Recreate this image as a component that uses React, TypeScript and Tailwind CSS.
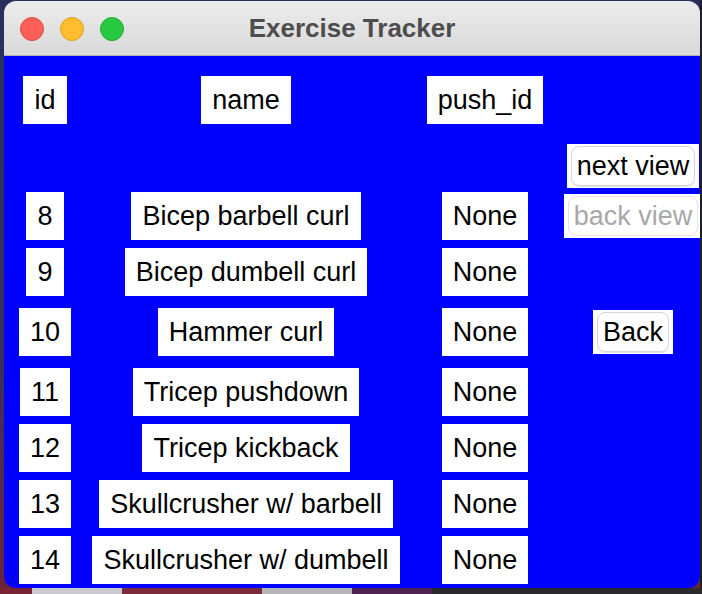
import React from "react";

type Row = { id: string; name: string; push: string; side?: "next" | "back" | "Back" };

const header: Row = { id: "id", name: "name", push: "push_id" };

const rows: Row[] = [
  { id: "8", name: "Bicep barbell curl", push: "None", side: "back" },
  { id: "9", name: "Bicep dumbell curl", push: "None" },
  { id: "10", name: "Hammer curl", push: "None", side: "Back" },
  { id: "11", name: "Tricep pushdown", push: "None" },
  { id: "12", name: "Tricep kickback", push: "None" },
  { id: "13", name: "Skullcrusher w/ barbell", push: "None" },
  { id: "14", name: "Skullcrusher w/ dumbell", push: "None" },
];

function Label({ text }: { text: string }) {
  return (
    <div className="bg-white h-[48px] px-[11px] flex items-center text-[27px] leading-none text-black whitespace-nowrap">
      {text}
    </div>
  );
}

function TkButton({ text, disabled }: { text: string; disabled?: boolean }) {
  return (
    <div className="bg-white h-[44px] px-[4px] py-[2px] flex items-center">
      <div
        className={
          "h-[40px] px-[5px] flex items-center rounded-[8px] border border-[#d4d4d4] shadow-[0_1px_1px_rgba(0,0,0,0.12)] text-[27px] leading-none whitespace-nowrap " +
          (disabled ? "text-[#a8a8a8] border-[#e2e2e2] shadow-none" : "text-black")
        }
      >
        {text}
      </div>
    </div>
  );
}

function Cell({ children }: { children?: React.ReactNode }) {
  return <div className="flex items-center justify-center min-w-0">{children}</div>;
}

function SideCell({ side }: { side?: Row["side"] }) {
  if (side === "back") return <Cell><TkButton text="back view" disabled /></Cell>;
  if (side === "Back") return <Cell><TkButton text="Back" /></Cell>;
  if (side === "next") return <Cell><TkButton text="next view" /></Cell>;
  return <Cell />;
}

export default function App() {
  return (
    <div className="w-[702px] h-[594px] overflow-hidden flex flex-col bg-[linear-gradient(180deg,#27305c_0%,#3a2f5e_60%,#6c2438_100%)] font-['Liberation_Sans',Arial,sans-serif]">
      <div className="flex h-[588px]">
        {/* window */}
        <div className="ml-[4px] mt-[1px] w-[696px] h-[587px] rounded-[12px] overflow-hidden flex flex-col">
          <div className="h-[55px] shrink-0 bg-[linear-gradient(180deg,#ececec,#d9d9d9)] border-b border-[#b2b2b2] flex items-center relative">
            <div className="flex gap-[16px] pl-[16px] pt-[1px]">
              <span className="w-[24px] h-[24px] rounded-full bg-[#fe5f57] border border-[#e14942]" />
              <span className="w-[24px] h-[24px] rounded-full bg-[#febc2e] border border-[#dea123]" />
              <span className="w-[24px] h-[24px] rounded-full bg-[#28c840] border border-[#1dad2b]" />
            </div>
            <div className="absolute inset-0 flex items-center justify-center text-[26px] font-bold text-[#4d4d4d]">
              Exercise Tracker
            </div>
          </div>
          <div className="flex-1 bg-[#0000ff] grid grid-cols-[82px_320px_158px_138px] grid-rows-[88px_44px_56px_56px_64px_56px_56px_56px_56px]">
            <Cell><Label text={header.id} /></Cell>
            <Cell><Label text={header.name} /></Cell>
            <Cell><Label text={header.push} /></Cell>
            <Cell />

            <Cell />
            <Cell />
            <Cell />
            <SideCell side="next" />

            {rows.map((r) => (
              <React.Fragment key={r.id}>
                <Cell><Label text={r.id} /></Cell>
                <Cell><Label text={r.name} /></Cell>
                <Cell><Label text={r.push} /></Cell>
                <SideCell side={r.side} />
              </React.Fragment>
            ))}
          </div>
        </div>
        <div className="flex-1 bg-[#1f1f2a]" />
      </div>
      {/* desktop peeking below the window */}
      <div className="flex h-[6px]">
        <div className="w-[32px] bg-[#7a2436]" />
        <div className="w-[90px] bg-[#c9c8cf]" />
        <div className="w-[140px] bg-[#7d2a3d]" />
        <div className="w-[90px] bg-[#b6b6b8]" />
        <div className="w-[80px] bg-[#4f2351]" />
        <div className="flex-1 bg-[#2b2b2e]" />
      </div>
    </div>
  );
}
